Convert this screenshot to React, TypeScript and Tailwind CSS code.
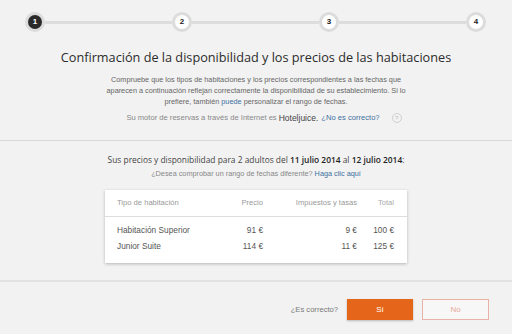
import { Fragment } from "react";

const steps = [1, 2, 3, 4];

const rooms = [
  { name: "Habitación Superior", price: "91 €", tax: "9 €", total: "100 €" },
  { name: "Junior Suite", price: "114 €", tax: "11 €", total: "125 €" },
];

export default function App() {
  return (
    <div className="h-[334px] w-[512px] overflow-hidden bg-[#f2f2f2] font-['Liberation_Sans',Arial,sans-serif]">
      {/* Stepper */}
      <div className="flex items-center pt-[12px] pl-[25px] pr-[26px]">
        {steps.map((s, i) => (
          <Fragment key={s}>
            {i > 0 && <div className="h-[3px] flex-1 bg-[#dddddd]" />}
            <div
              className={
                s === 1
                  ? "flex h-[20px] w-[20px] items-center justify-center rounded-full border-[3px] border-[#dcdcdc] bg-[#2a2a2a] text-[8px] font-bold text-white"
                  : "flex h-[20px] w-[20px] items-center justify-center rounded-full border-[3px] border-[#dcdcdc] bg-white text-[8px] font-bold text-[#222]"
              }
            >
              {s}
            </div>
          </Fragment>
        ))}
      </div>

      {/* Intro */}
      <div className="flex h-[109px] flex-col items-center border-b border-[#d9d9d9]">
        <h1 className="mt-[14px] font-['Open_Sans',sans-serif] text-[12.7px] leading-[22px] text-[#2b2b2b]">
          Confirmación de la disponibilidad y los precios de las habitaciones
        </h1>
        <p className="mt-[6px] w-[320px] text-center text-[7.3px] leading-[11px] text-[#666]">
          Compruebe que los tipos de habitaciones y los precios correspondientes a las fechas que
          aparecen a continuación reflejan correctamente la disponibilidad de su establecimiento. Si lo
          prefiere, también <span className="text-[#3d6f9e]">puede</span> personalizar el rango de fechas.
        </p>
        <div className="mt-[5px] flex items-center pl-[16px] text-[7.6px] leading-[12px] text-[#888]">
          <span>Su motor de reservas a través de Internet es</span>
          <span className="ml-[2px] text-[8.5px] text-[#444]">Hoteljuice.</span>
          <span className="ml-[3px] text-[#3d6f9e]">¿No es correcto?</span>
          <span className="ml-[12px] flex h-[10px] w-[10px] items-center justify-center rounded-full border border-[#cfcfcf] text-[6px] text-[#bbb]">
            ?
          </span>
        </div>
      </div>

      {/* Prices */}
      <div className="flex h-[141px] flex-col items-center border-b-2 border-[#e2e2e2]">
        <p className="mt-[12px] font-['Open_Sans',sans-serif] text-[8.4px] leading-[14px] text-[#444]">
          Sus precios y disponibilidad para 2 adultos del <b className="font-semibold text-[#222]">11 julio 2014</b> al{" "}
          <b className="font-semibold text-[#222]">12 julio 2014</b>:
        </p>
        <p className="mt-[1px] text-[7.3px] leading-[11px] text-[#888]">
          ¿Desea comprobar un rango de fechas diferente? <span className="text-[#3d6f9e]">Haga clic aquí</span>
        </p>

        <div className="mt-[11px] w-[302px] bg-white shadow-[0_1px_3px_rgba(0,0,0,0.25)]">
          <div className="grid h-[27px] grid-cols-[92px_54px_94px_37px] items-center border-b border-[#dedede] pl-[12px] text-[7.6px] text-[#999]">
            <span>Tipo de habitación</span>
            <span className="text-right">Precio</span>
            <span className="text-right">Impuestos y tasas</span>
            <span className="text-right text-[#aaa]">Total</span>
          </div>
          <div className="pt-[5px] pb-[9px]">
            {rooms.map((r) => (
              <div
                key={r.name}
                className="grid h-[16px] grid-cols-[92px_54px_94px_37px] items-center pl-[12px] text-[8.3px] text-[#555]"
              >
                <span>{r.name}</span>
                <span className="text-right">{r.price}</span>
                <span className="text-right">{r.tax}</span>
                <span className="text-right">{r.total}</span>
              </div>
            ))}
          </div>
        </div>
      </div>

      {/* Confirm */}
      <div className="flex items-center justify-end pt-[17px] pr-[23px]">
        <span className="mr-[9px] text-[7.6px] text-[#777]">¿Es correcto?</span>
        <button className="h-[21px] w-[66px] bg-[#e5661a] text-[8px] text-white shadow-[0_1px_2px_rgba(0,0,0,0.25)]">
          Sí
        </button>
        <button className="ml-[9px] h-[21px] w-[67px] border border-[#e8b3a6] bg-[#f7f7f7] text-[8px] text-[#e9a897]">
          No
        </button>
      </div>
    </div>
  );
}
